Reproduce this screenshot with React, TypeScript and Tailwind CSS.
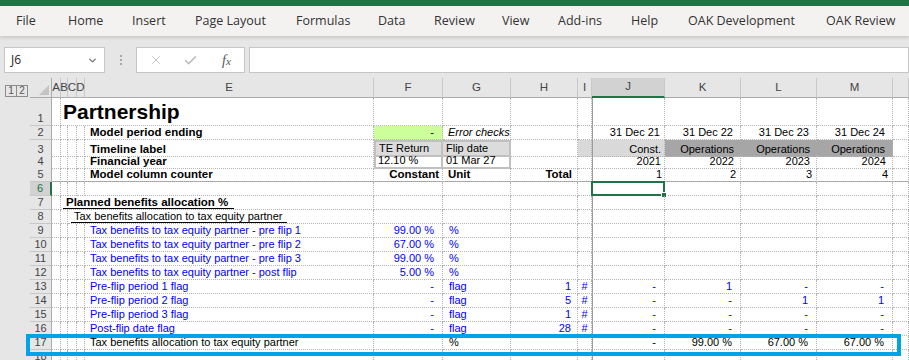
import React from "react";
import { X, Check, ChevronDown } from "lucide-react";

const GRID =
  "grid grid-cols-[30px_22px_9px_7px_9px_8px_289px_69px_68px_67px_14px_73px_76px_76px_76px_1fr]";
const LETTERS = ["A", "B", "C", "D", "E", "F", "G", "H", "I", "J", "K", "L", "M", "N"];
const SPAN: Record<number, string> = { 1: "", 2: "col-span-2", 3: "col-span-3", 4: "col-span-4", 5: "col-span-5" };

type Spec = { t?: React.ReactNode; span?: number; cls?: string; raw?: boolean };

const BLUE = "text-[#0000ff]";
const BOLD = "font-bold text-[11.5px]";

const Row = ({
  n,
  h = "h-[14px]",
  cells = {},
  sel = false,
}: {
  n: number;
  h?: string;
  cells?: Record<string, Spec>;
  sel?: boolean;
}) => {
  const out: React.ReactNode[] = [];
  for (let i = 0; i < LETTERS.length; i++) {
    const L = LETTERS[i];
    const s = cells[L];
    const span = s?.span ?? 1;
    out.push(
      <div
        key={L}
        className={`${SPAN[span]} ${s?.raw ? "" : "border-r border-b border-dotted border-[#b4b4b4]"} ${
          L === "J" ? "shadow-[inset_1px_0_0_#9c9c9c] relative" : ""
        } flex items-end whitespace-nowrap min-w-0 leading-[13px] ${s?.cls ?? ""}`}
      >
        {s?.t}
        {L === "J" && sel && (
          <div className="absolute -left-px -top-px -right-px -bottom-px border-2 border-[#217346]">
            <div className="absolute -right-[4px] -bottom-[4px] w-[6px] h-[6px] bg-[#217346] border border-white" />
          </div>
        )}
      </div>
    );
    i += span - 1;
  }
  return (
    <div className={`${GRID} ${h}`}>
      <div className="bg-[#e6e6e6]" />
      <div
        className={`flex items-end justify-center leading-[13px] border-b border-b-[#c8c8c8] ${
          sel
            ? "bg-[#d2d2d2] text-[#217346] border-r-2 border-r-[#217346]"
            : "bg-[#e6e6e6] text-[#444] border-r border-r-[#ababab]"
        }`}
      >
        {n}
      </div>
      {out}
    </div>
  );
};

const tabs: [string, string][] = [
  ["File", "w-[52px]"],
  ["Home", "w-[64px]"],
  ["Insert", "w-[63px]"],
  ["Page Layout", "w-[101px]"],
  ["Formulas", "w-[82px]"],
  ["Data", "w-[56px]"],
  ["Review", "w-[68px]"],
  ["View", "w-[56px]"],
  ["Add-ins", "w-[73px]"],
  ["Help", "w-[57px]"],
  ["OAK Development", "w-[138px]"],
  ["OAK Review", "w-[90px]"],
];

const num = (v: string, extra = "") => ({ t: v, cls: `justify-end pr-[8px] ${extra}` });

export default function App() {
  return (
    <div className="relative w-[909px] h-[360px] overflow-hidden bg-white font-['Liberation_Sans',Arial,sans-serif] text-[11px] text-black">
      {/* title bar strip */}
      <div className="h-[6px] bg-[#217346]" />
      {/* ribbon tabs */}
      <div className="h-[30px] bg-[#f3f2f1] flex items-center pl-[16px] text-[12.5px] text-[#333] font-['Open_Sans',sans-serif] shadow-[0_2px_3px_rgba(0,0,0,0.12)] relative z-10">
        {tabs.map(([t, w]) => (
          <span key={t} className={`${w} shrink-0`}>
            {t}
          </span>
        ))}
      </div>
      {/* formula bar */}
      <div className="h-[42px] bg-[#e6e6e6] flex items-start pt-[11px] font-['Open_Sans',sans-serif]">
        <div className="ml-[4px] w-[101px] h-[26px] bg-white border border-[#c6c6c6] flex items-center justify-between pl-[6px] pr-[6px] text-[12px] text-[#222]">
          <span>J6</span>
          <ChevronDown size={11} className="text-[#777]" strokeWidth={3} />
        </div>
        <div className="w-[31px] h-[26px] flex flex-col items-center justify-center gap-[2px]">
          <span className="w-[2px] h-[2px] bg-[#a8a8a8]" />
          <span className="w-[2px] h-[2px] bg-[#a8a8a8]" />
          <span className="w-[2px] h-[2px] bg-[#a8a8a8]" />
        </div>
        <div className="w-[109px] h-[26px] bg-white border border-[#c6c6c6] flex items-center pl-[12px] gap-[20px]">
          <X size={14} className="text-[#bdbdbd]" strokeWidth={1.5} />
          <Check size={15} className="text-[#bdbdbd]" strokeWidth={2.5} />
          <span className="ml-[4px] font-['Liberation_Serif',serif] italic text-[14px] text-[#555]">
            f<span className="text-[11px]">x</span>
          </span>
        </div>
        <div className="ml-[4px] flex-1 h-[26px] bg-white border border-[#c6c6c6]" />
      </div>

      {/* column headers */}
      <div className={`${GRID} h-[20px] bg-[#e6e6e6] text-[11.5px] text-[#444]`}>
        <div className="flex items-start pt-[7px] pl-[5px]">
          <div className="flex border border-[#8c8c8c] h-[12px] text-[10px] leading-[10px] text-[#555]">
            <span className="w-[11px] text-center border-r border-[#8c8c8c]">1</span>
            <span className="w-[10px] text-center">2</span>
          </div>
        </div>
        <div className="flex items-end justify-end pr-[2px] pb-[2px] border-b border-[#ababab] border-r border-r-[#ababab]">
          <svg width="10" height="10" viewBox="0 0 10 10">
            <polygon points="10,0 10,10 0,10" fill="#c4c4c4" />
          </svg>
        </div>
        {LETTERS.map((L) => (
          <div
            key={L}
            className={`flex items-center justify-center border-r border-r-[#c8c8c8] ${
              L === "J" ? "bg-[#d2d2d2] border-b-2 border-b-[#217346]" : "border-b border-b-[#ababab]"
            }`}
          >
            {L === "N" ? "" : L}
          </div>
        ))}
      </div>

      <Row
        n={1}
        h="h-[28px]"
        cells={{
          B: { t: <span className="text-[21px] font-bold leading-[24px] pl-[2px] pb-[1px]">Partnership</span>, span: 4 },
        }}
      />
      <Row
        n={2}
        cells={{
          E: { t: "Model period ending", cls: `pl-[5px] ${BOLD}` },
          F: { t: "-", cls: "justify-end pr-[8px] bg-[#ccff99]" },
          G: { t: "Error checks", cls: "pl-[5px] italic" },
          J: { t: "31 Dec 21", cls: "justify-end pr-[4px]" },
          K: { t: "31 Dec 22", cls: "justify-end pr-[7px]" },
          L: { t: "31 Dec 23", cls: "justify-end pr-[7px]" },
          M: { t: "31 Dec 24", cls: "justify-end pr-[7px]" },
        }}
      />
      <Row
        n={3}
        cells={{
          E: { t: "Timeline label", cls: `pl-[5px] ${BOLD}` },
          F: { t: "TE Return", raw: true, cls: "pl-[3px] bg-[#dcdcdc] border-2 border-[#c0c0c0]" },
          G: { t: "Flip date", raw: true, cls: "pl-[3px] bg-[#dcdcdc] border-2 border-l-0 border-[#c0c0c0]" },
          I: { cls: "bg-[#d9d9d9]" },
          J: { t: "Const.", cls: "justify-end pr-[3px] bg-[#d9d9d9]" },
          K: { t: "Operations", cls: "justify-end pr-[7px] bg-[#a6a6a6] border-r-0" },
          L: { t: "Operations", cls: "justify-end pr-[7px] bg-[#a6a6a6] border-r-0" },
          M: { t: "Operations", cls: "justify-end pr-[7px] bg-[#a6a6a6]" },
        }}
      />
      <Row
        n={4}
        cells={{
          E: { t: "Financial year", cls: `pl-[5px] ${BOLD}` },
          F: { t: "12.10 %", raw: true, cls: "pl-[2px] border-2 border-t-0 border-[#c0c0c0]" },
          G: { t: "01 Mar 27", raw: true, cls: "pl-[3px] border-2 border-t-0 border-l-0 border-[#c0c0c0]" },
          J: { t: "2021", cls: "justify-end pr-[3px]" },
          K: { t: "2022", cls: "justify-end pr-[6px]" },
          L: { t: "2023", cls: "justify-end pr-[6px]" },
          M: { t: "2024", cls: "justify-end pr-[6px]" },
        }}
      />
      <Row
        n={5}
        h="h-[13px]"
        cells={{
          E: { t: "Model column counter", cls: `pl-[5px] ${BOLD}` },
          F: { t: "Constant", cls: `justify-end pr-[3px] ${BOLD}` },
          G: { t: "Unit", cls: `pl-[5px] ${BOLD}` },
          H: { t: "Total", cls: `justify-end pr-[5px] ${BOLD}` },
          J: { t: "1", cls: "justify-end pr-[2px]" },
          K: { t: "2", cls: "justify-end pr-[4px]" },
          L: { t: "3", cls: "justify-end pr-[4px]" },
          M: { t: "4", cls: "justify-end pr-[4px]" },
        }}
      />
      <div className="h-px ml-[30px] bg-[#9c9c9c]" />
      <Row n={6} sel />
      <Row
        n={7}
        cells={{
          B: {
            t: (
              <span className={`ml-[2px] pl-[3px] pr-[6px] border-b border-black leading-[12px] ${BOLD}`}>
                Planned benefits allocation %
              </span>
            ),
            span: 4,
          },
        }}
      />
      <Row
        n={8}
        cells={{
          C: {
            t: (
              <span className="ml-[3px] pl-[3px] pr-[4px] border-b border-black leading-[12px]">
                Tax benefits allocation to tax equity partner
              </span>
            ),
            span: 3,
          },
        }}
      />
      {[
        ["Tax benefits to tax equity partner - pre flip 1", "99.00 %"],
        ["Tax benefits to tax equity partner - pre flip 2", "67.00 %"],
        ["Tax benefits to tax equity partner - pre flip 3", "99.00 %"],
        ["Tax benefits to tax equity partner - post flip", "5.00 %"],
      ].map(([label, v], i) => (
        <Row
          key={label}
          n={9 + i}
          cells={{
            E: { t: label, cls: `pl-[5px] ${BLUE}` },
            F: num(v, BLUE),
            G: { t: "%", cls: `pl-[6px] ${BLUE}` },
          }}
        />
      ))}
      {[
        ["Pre-flip period 1 flag", "1", ["-", "1", "-", "-"]],
        ["Pre-flip period 2 flag", "5", ["-", "-", "1", "1"]],
        ["Pre-flip period 3 flag", "1", ["-", "-", "-", "-"]],
        ["Post-flip date flag", "28", ["-", "-", "-", "-"]],
      ].map(([label, tot, vals], i) => {
        const v = vals as string[];
        return (
          <Row
            key={label as string}
            n={13 + i}
            cells={{
              E: { t: label as string, cls: `pl-[5px] ${BLUE}` },
              F: num("-", BLUE),
              G: { t: "flag", cls: `pl-[6px] ${BLUE}` },
              H: { t: tot as string, cls: `justify-end pr-[6px] ${BLUE}` },
              I: { t: "#", cls: `justify-center ${BLUE}` },
              J: num(v[0], BLUE),
              K: num(v[1], BLUE),
              L: num(v[2], BLUE),
              M: num(v[3], BLUE),
            }}
          />
        );
      })}
      <Row
        n={17}
        cells={{
          E: { t: "Tax benefits allocation to tax equity partner", cls: "pl-[5px]" },
          G: { t: "%", cls: "pl-[6px]" },
          J: num("-"),
          K: num("99.00 %"),
          L: num("67.00 %"),
          M: num("67.00 %"),
        }}
      />
      <Row n={18} />

      {/* highlight annotation */}
      <div className="absolute left-[26px] top-[334px] w-[875px] h-[22px] border-4 border-[#00a2e8] pointer-events-none" />
    </div>
  );
}
